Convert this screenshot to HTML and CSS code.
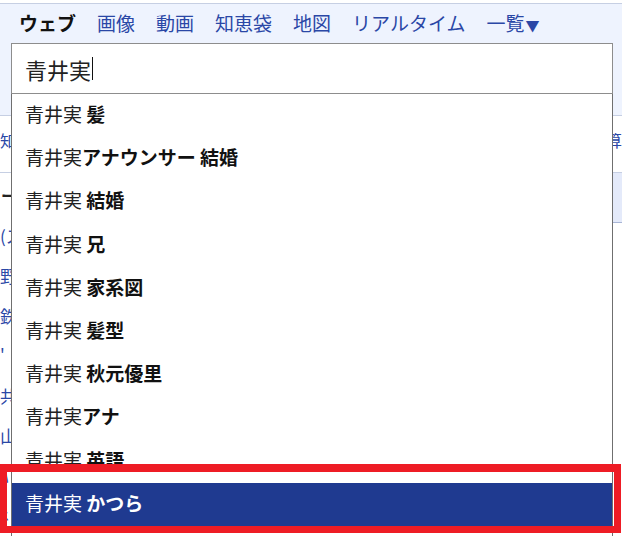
FILE: index.html
```html
<!DOCTYPE html>
<html lang="ja">
<head>
    <meta charset="UTF-8">
    <title>青井実 - 検索</title>
    <link rel="stylesheet" href="styles.css">
</head>
<body>

<div class="header">
    <nav class="tabs">
        <span class="tab tab-current">ウェブ</span>
        <a href="#" class="tab">画像</a>
        <a href="#" class="tab">動画</a>
        <a href="#" class="tab">知恵袋</a>
        <a href="#" class="tab">地図</a>
        <a href="#" class="tab">リアルタイム</a>
        <a href="#" class="tab">一覧<span class="arrow">▼</span></a>
    </nav>

    <div class="searchbox">
        <span class="query">青井実</span><span class="caret"></span>

        <!-- suggestion list, drawn over the page -->
        <ul class="suggest">
            <li>青井実 <b>髪</b></li>
            <li>青井実<b>アナウンサー 結婚</b></li>
            <li>青井実 <b>結婚</b></li>
            <li>青井実 <b>兄</b></li>
            <li>青井実 <b>家系図</b></li>
            <li>青井実 <b>髪型</b></li>
            <li>青井実 <b>秋元優里</b></li>
            <li>青井実<b>アナ</b></li>
            <li>青井実 <b>英語</b></li>
            <li class="selected">青井実 <b>かつら</b></li>
        </ul>
    </div>
</div>

<div class="subnav">
    <a href="#">知恵袋</a>
    <a href="#">計算</a>
</div>

<div class="filters">
    <span class="filter-label">ー</span>
    <span class="filter-option"></span>
</div>

<ul class="results">
    <li><a href="#">(ス</a></li>
    <li><a href="#">野</a></li>
    <li><a href="#">鉄</a></li>
    <li><a href="#">'</a></li>
    <li><a href="#">共</a></li>
    <li><a href="#">山</a></li>
    <li><a href="#">ﾊ</a></li>
    <li><a href="#">ﾈ</a></li>
</ul>

<!-- red annotation box around the selected suggestion -->
<div class="highlight"></div>

</body>
</html>
```

FILE: styles.css
```css
html, body {
    height: 100%;
}
body {
    margin: 0;
    padding-top: 3px;
    overflow: hidden;
    background-color: #fff;
    font-family: "Noto Sans CJK JP", "Noto Sans", sans-serif;
    color: #222;
    position: relative;
}
a {
    color: #2a47a6;
    text-decoration: none;
}

.header {
    background-color: #eef3fe;
    border-top: 1px solid #c6cfe3;
    border-bottom: 1px solid #c6cfe3;
    padding: 7px 10px 21px 11px;
}
.tabs {
    display: flex;
    gap: 21px;
    padding-left: 8px;
    font-size: 19px;
    line-height: 24px;
    height: 24px;
}
.tab-current {
    font-weight: bold;
    color: #111;
}
.arrow {
    font-size: 14px;
    margin-left: 1px;
}

.searchbox {
    position: relative;
    margin-top: 8px;
    height: 51px;
    width: 602px;
    box-sizing: border-box;
    border: 1px solid #8d8d8d;
    background-color: #fff;
    padding-left: 13px;
    display: flex;
    align-items: center;
}
.query {
    font-size: 22px;
    line-height: 26px;
    color: #222;
}
.caret {
    display: inline-block;
    width: 1px;
    height: 23px;
    background-color: #111;
    margin-left: 1px;
}

.suggest {
    position: absolute;
    top: calc(100% + 1px);
    left: -1px;
    right: -1px;
    margin: 0;
    padding: 0 0 20px 0;
    list-style: none;
    background-color: #fff;
    border-left: 1px solid #6f6f6f;
    border-right: 1px solid #6f6f6f;
    z-index: 10;
}
.suggest li {
    height: 43.2px;
    box-sizing: border-box;
    padding: 0 0 4.2px 13px;
    line-height: 39px;
    font-size: 19px;
    color: #222;
    white-space: nowrap;
}
.suggest b {
    font-weight: bold;
    color: #111;
}
.suggest li.selected {
    background-color: #1f3a90;
    color: #fff;
}
.suggest li.selected b {
    color: #fff;
}

.subnav {
    height: 56px;
    border-bottom: 1px solid #c6cfe3;
    display: flex;
    justify-content: space-between;
    align-items: center;
    font-size: 16px;
}
.subnav a {
    margin-top: -8px;
}

.filters {
    height: 50px;
    display: flex;
    justify-content: space-between;
}
.filter-label {
    font-size: 16px;
    font-weight: bold;
    line-height: 44px;
    padding-left: 1px;
}
.filter-option {
    width: 110px;
    background-color: #e4eafa;
    border-bottom: 1px solid #a9b6d6;
}

.results {
    margin: 0;
    padding: 0;
    list-style: none;
    font-size: 17px;
}
.results li {
    line-height: 26px;
    margin-bottom: 14px;
}

.highlight {
    position: absolute;
    left: 0;
    top: 464px;
    width: 621px;
    height: 69px;
    box-sizing: border-box;
    border: 7px solid #ee1c25;
    border-top-width: 8px;
    z-index: 20;
}
```
